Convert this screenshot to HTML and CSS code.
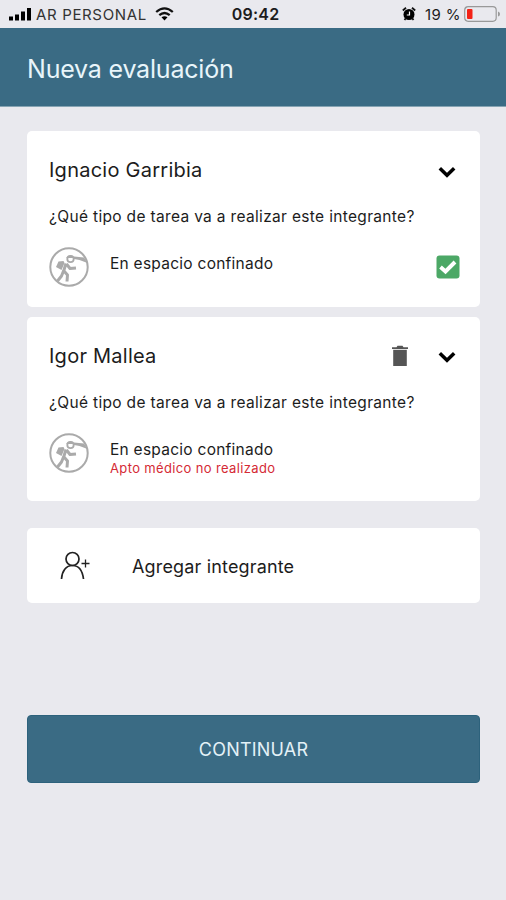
FILE: index.html
```html
<!DOCTYPE html>
<html lang="es">
<head>
<meta charset="utf-8">
<title>Nueva evaluación</title>
<link rel="stylesheet" href="styles.css">
</head>
<body>
<svg class="defs" width="0" height="0" aria-hidden="true">
  <symbol id="worker" viewBox="0 0 40 40">
    <circle cx="20" cy="20" r="18.7" fill="none" stroke="#aaa" stroke-width="2"/>
    <path d="M25 9.500l10 1 3.500 5.500-8-3-5.500-1z" fill="#aaa"/>
    <circle cx="21.500" cy="12" r="3.200" fill="none" stroke="#aaa" stroke-width="1.800"/>
    <path d="M17 11q4.500-5.500 9 0z" fill="#aaa"/>
    <path d="M9.500 14.500l5-.5 1 2-3 7-5.500-3z" fill="#aaa"/>
    <path d="M17 16.500l-2.500 8M17.500 17l3.500 4.500 6-.5M15 24l3.500 4-.5 6.500M14.500 24l-2 5-4 5" fill="none" stroke="#aaa" stroke-width="3" stroke-linejoin="round"/>
  </symbol>
  <symbol id="chevron" viewBox="0 0 18 12">
    <path d="M1.800 2.200l7.200 7 7.200-7" fill="none" stroke="#000" stroke-width="3.500"/>
  </symbol>
</svg>
<header class="status">
  <svg class="signal" width="23" height="13" viewBox="0 0 23 13"><rect x="0" y="8.500" width="4" height="4"/><rect x="6" y="6.500" width="4" height="6"/><rect x="12" y="3.500" width="4" height="9"/><rect x="18" y="0" width="4" height="12.500"/></svg>
  <span class="carrier">AR PERSONAL</span>
  <svg class="wifi" width="19" height="14" viewBox="0 0 19 14"><path d="M1.200 5Q9.500-2.200 17.800 5M4.300 8.200Q9.500 3.800 14.700 8.200" fill="none" stroke="#111" stroke-width="2.300"/><path d="M6.500 10.300Q9.500 8 12.500 10.300L9.500 13.500z"/></svg>
  <span class="time">09:42</span>
  <svg class="alarm" width="14" height="14" viewBox="0 0 14 14"><circle cx="7" cy="7.500" r="5.500"/><path d="M.8 3.500L4 .8M13.200 3.500L10 .8M2.500 13l1.500-2M11.500 13L10 11" stroke="#111" stroke-width="1.800"/><path d="M7.500 4.500V8H4.800" fill="none" stroke="#fff" stroke-width="1.200"/></svg>
  <span class="percent">19 %</span>
  <svg class="battery" width="37" height="16" viewBox="0 0 37 16"><rect x=".7" y=".7" width="31.500" height="14.600" rx="3.500" fill="none" stroke="#999" stroke-width="1.200"/><rect x="3" y="3" width="5.500" height="10" rx="1" fill="#f32216"/><path d="M34 5.500q2 .5 2 2.500t-2 2.500z" fill="#999"/></svg>
</header>
<div class="titlebar"><h1>Nueva evaluación</h1></div>
<main>
  <section class="card first">
    <div class="head"><h2>Ignacio Garribia</h2><svg class="chev" width="18" height="12"><use href="#chevron"/></svg></div>
    <p class="question">¿Qué tipo de tarea va a realizar este integrante?</p>
    <div class="task">
      <svg class="worker" width="40" height="40"><use href="#worker"/></svg>
      <div class="desc"><p class="name">En espacio confinado</p></div>
      <svg class="check" width="24" height="24" viewBox="0 0 24 24"><rect x=".5" y=".5" width="23" height="23" rx="3" fill="#4ca866"/><path d="M4.500 12l5 4.500L19 7" fill="none" stroke="#fff" stroke-width="3.900"/></svg>
    </div>
  </section>
  <section class="card second">
    <div class="head"><h2>Igor Mallea</h2><svg class="trash" width="18" height="22" viewBox="0 0 18 22"><path d="M1 2.200h4.500L6.500 .7h5l1 1.500H17V4H1z" fill="#555"/><path d="M2.200 4.800h13.600V21H2.200z" fill="#555"/></svg><svg class="chev" width="18" height="12"><use href="#chevron"/></svg></div>
    <p class="question">¿Qué tipo de tarea va a realizar este integrante?</p>
    <div class="task">
      <svg class="worker" width="40" height="40"><use href="#worker"/></svg>
      <div class="desc"><p class="name">En espacio confinado</p><p class="error">Apto médico no realizado</p></div>
    </div>
  </section>
  <section class="card add">
    <svg width="30" height="30" viewBox="0 0 30 30" fill="none" stroke="#222" stroke-width="1.700"><circle cx="12.500" cy="8" r="6.500"/><path d="M1.500 28C2 20 6 14.500 12.500 14.500S22.500 20 23.500 28"/><path d="M21.500 12.500h8M25.500 8.500v8" stroke-width="1.300"/></svg>
    <span>Agregar integrante</span>
  </section>
  <button class="continue"><span>CONTINUAR</span></button>
</main>
</body>
</html>
```
FILE: styles.css
```css
* { box-sizing: border-box; }
body { margin: 0; height: 900px; background: #e9e9ee; color: #1c1c1c; font-family: Inter, "Liberation Sans", sans-serif; overflow: hidden; }
h1, h2, p { margin: 0; font-weight: 400; white-space: nowrap; }
svg { display: block; flex: none; }
.defs { position: absolute; }
.status { height: 28px; display: flex; align-items: center; padding: 0 5px 0 9px; font-size: 15px; white-space: nowrap; }
.carrier { width: 111px; margin-left: 4px; color: #333; letter-spacing: .65px; }
.wifi { margin-left: 8px; }
.time { width: 49px; margin-left: 58px; font-weight: 600; font-size: 16px; letter-spacing: .2px; }
.alarm { margin-left: 122px; }
.percent { width: 36px; margin-left: 9px; letter-spacing: .4px; }
.battery { margin-left: 3px; }
.titlebar { height: 79px; background: #3a6b84; padding: 0 27px; display: flex; align-items: center; border-bottom: 1px solid #86a4b3; }
h1 { font-size: 25px; line-height: 30px; color: #e8f5fa; margin-top: 4px; letter-spacing: -.2px; }
main { padding: 24px 26px 0 27px; }
.card { background: #fff; border-radius: 5px; padding: 25px 20px 0 22px; }
.first { height: 176px; }
.second { height: 184px; margin-top: 10px; }
.head { display: flex; height: 28px; align-items: center; }
h2 { font-size: 20px; line-height: 28px; flex: 1; letter-spacing: .25px; }
.chev { margin-top: 4px; margin-right: 4px; }
.second .chev { margin-top: 2px; }
.trash { margin-right: 29px; }
.question { font-size: 15.5px; line-height: 20px; margin-top: 23px; letter-spacing: .33px; }
.task { display: flex; margin-top: 20px; height: 40px; }
.desc { flex: 1; margin-left: 21px; }
.name { font-size: 15.5px; line-height: 20px; margin-top: 7px; letter-spacing: .26px; }
.error { font-size: 13px; line-height: 16px; color: #d52a35; letter-spacing: .36px; }
.check { margin-top: 8px; }
.add { height: 75px; margin-top: 27px; padding: 0 33px; display: flex; align-items: center; }
.add span { margin-left: 42px; margin-top: 1px; font-size: 18px; letter-spacing: .16px; }
.continue { display: flex; width: 100%; height: 68px; margin-top: 112px; padding: 0; border: 1px solid #2d627c; border-radius: 4px; background: #3a6b84; color: #e3f1f7; font: 400 18px Inter, sans-serif; letter-spacing: .2px; align-items: center; justify-content: center; }
```
